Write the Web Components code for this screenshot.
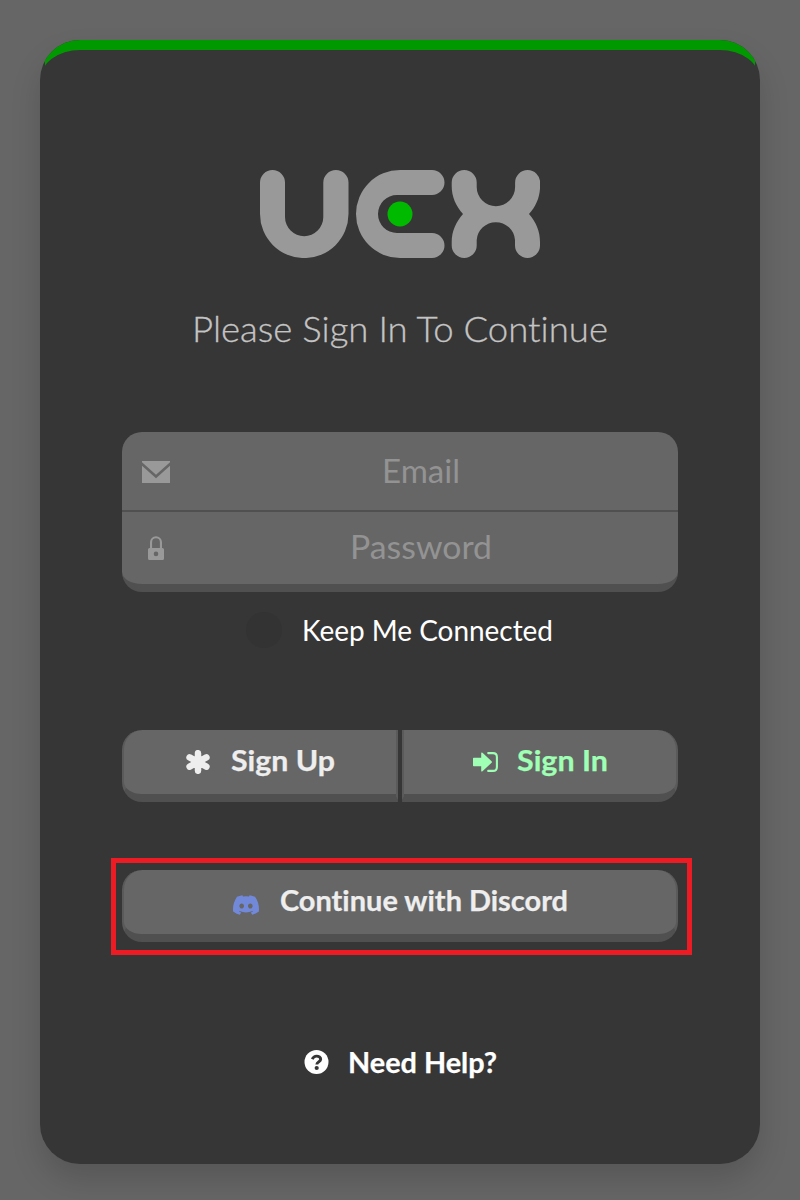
<!DOCTYPE html>
<html lang="en">
<head>
<meta charset="utf-8">
<title>UEX - Sign In</title>
<style>
html,body{margin:0;height:100%;background:#666}
body{font-family:Lato,"Open Sans",sans-serif;font-variant-ligatures:none;overflow:hidden}
</style>
</head>
<body>
<sign-in-page></sign-in-page>
<script>
const define = (name, html, setup) => customElements.define(name, class extends HTMLElement {
  constructor() {
    super();
    const t = document.createElement('template');
    t.innerHTML = html;
    this.attachShadow({mode: 'open'}).append(t.content.cloneNode(true));
  }
  connectedCallback() { if (setup) setup(this); }
});

// Text stretched horizontally so that the line has the given width.
define('ui-label', `<style>:host{display:block;white-space:nowrap;line-height:1.25}span{display:inline-block;transform-origin:0 50%}</style><span><slot></slot></span>`, el => {
  const span = el.shadowRoot.querySelector('span');
  const want = parseFloat(el.getAttribute('width'));
  const scale = want / span.getBoundingClientRect().width;
  el.style.width = want + 'px';
  span.style.transform = 'scaleX(' + scale + ')';
});

const icons = {
  mail: '<svg width="28" height="22" viewBox="0 0 28 22"><path d="M0 0H28V1.300L14 13.800 0 1.300zM0 4.800L14 17.300 28 4.800V22H0z"/></svg>',
  lock: '<svg width="16" height="24" viewBox="0 0 16 24"><path fill-rule="evenodd" d="M2 12V6.200a6 6 0 0 1 12 0V12h.400q1.600 0 1.600 1.600v8.800q0 1.600-1.600 1.600H1.600Q0 24 0 22.400V13.600Q0 12 1.600 12zM4.100 12h7.800V6.200a3.900 3.900 0 0 0-7.800 0zM8 15.600a2.300 2.300 0 1 0 0 4.600 2.300 2.300 0 0 0 0-4.600z"/></svg>',
  asterisk: '<svg width="24" height="24" viewBox="0 0 24 24"><path d="M12 3.200V20.800M3.600 7.400L20.400 16.600M20.400 7.400L3.600 16.600" fill="none" stroke="currentColor" stroke-width="6.500" stroke-linecap="round"/></svg>',
  login: '<svg width="25" height="20" viewBox="0 0 25 20"><path d="M0 6.500Q0 5.800.700 5.800H8.200V1.300Q8.200-.2 9.500.8L18.600 9.200Q19.300 10 18.600 10.800L9.500 19.200Q8.200 20.200 8.200 18.700V14.200H.700Q0 14.200 0 13.500z"/><path d="M15.200 1.100H20Q23.900 1.100 23.900 5V15Q23.900 18.900 20 18.900H15.200" style="fill:none" stroke="currentColor" stroke-width="2.100" stroke-linecap="round"/></svg>',
  discord: '<svg width="26" height="20" viewBox="0 0 24 18.600" preserveAspectRatio="none"><path transform="translate(0 -2.700)" d="M20.317 4.370a19.790 19.790 0 0 0-4.885-1.515.074.074 0 0 0-.079.037c-.210.375-.444.864-.608 1.250a18.270 18.270 0 0 0-5.487 0 12.640 12.640 0 0 0-.617-1.250.077.077 0 0 0-.079-.037A19.740 19.740 0 0 0 3.677 4.370C.533 9.046-.320 13.580.099 18.058a.082.082 0 0 0 .031.057 19.900 19.900 0 0 0 5.993 3.030.078.078 0 0 0 .084-.028c.462-.630.874-1.295 1.226-1.994a.076.076 0 0 0-.041-.106 13.107 13.107 0 0 1-1.872-.892.077.077 0 0 1-.008-.128l.372-.292a.074.074 0 0 1 .077-.010c3.928 1.793 8.180 1.793 12.062 0a.074.074 0 0 1 .078.010l.373.292a.077.077 0 0 1-.006.127 12.299 12.299 0 0 1-1.873.892.077.077 0 0 0-.041.107c.360.698.772 1.362 1.225 1.993a.076.076 0 0 0 .084.028 19.839 19.839 0 0 0 6.002-3.030.077.077 0 0 0 .032-.054c.500-5.177-.838-9.674-3.549-13.660zM8.020 15.331c-1.183 0-2.157-1.086-2.157-2.419s.956-2.419 2.157-2.419c1.210 0 2.176 1.095 2.157 2.419 0 1.333-.956 2.419-2.157 2.419zm7.975 0c-1.183 0-2.157-1.086-2.157-2.419s.955-2.419 2.157-2.419c1.210 0 2.176 1.095 2.157 2.419 0 1.333-.946 2.419-2.157 2.419z"/></svg>',
  help: '<svg width="25" height="24" viewBox="0 0 24 24"><circle cx="12" cy="12" r="12"/><path d="M7.700 9.200C8.700 7.200 10 6.100 12.100 6.100C14.300 6.100 16.200 7.400 16.200 9.300C16.200 11.800 12.300 11.600 12.300 14.500" stroke="#363636" style="fill:none" stroke-width="2.900"/><circle cx="12.200" cy="18" r="2.100" style="fill:#363636"/></svg>'
};
define('ui-icon', `<style>:host{display:block;flex:none}svg{display:block;fill:currentColor}</style><div></div>`, el => {
  el.shadowRoot.querySelector('div').innerHTML = icons[el.getAttribute('name')];
});

define('uex-logo', `<style>:host{display:block;width:280px;height:88px}svg{display:block}</style>
<svg width="280" height="88" viewBox="0 0 280 88" fill="#999">
<path d="M0 12.500a12.500 12.500 0 0 1 25 0V47a19 19 0 0 0 38.300 0V12.500a12.600 12.500 0 0 1 25.200 0V44a44.200 44 0 0 1-88.500 0z"/>
<path d="M140 0H172a12.500 12.500 0 0 1 0 25H137a19 19 0 0 0 0 38h35a12.500 12.500 0 0 1 0 25H140a44 44 0 0 1 0-88z"/>
<path d="M191.700 12.500a12.500 12.500 0 0 1 25 0V17a19.200 19.200 0 0 0 38.400 0V12.500a12.500 12.500 0 0 1 25 0V16C280 27 276 36 269 44 276 52 280 61 280 72V75.500a12.500 12.500 0 0 1-25 0V70a19.200 19.200 0 0 0-38.300 0V75.500a12.500 12.500 0 0 1-25 0V72C191.700 61 196 52 203 44 196 36 191.700 27 191.700 16z"/>
<circle cx="140" cy="44" r="12.500" fill="#00ba00"/></svg>`);

define('login-card', `<style>
:host{display:block;position:relative;box-sizing:border-box;width:720px;height:1124px;margin:40px;padding:130px 82px 0;border-radius:40px;background:#363636;box-shadow:0 16px 30px rgba(0,0,0,.15)}
:host::before{content:"";position:absolute;inset:0;box-sizing:border-box;border-radius:40px;border-top:10px solid #090;clip-path:inset(0 5px)}
</style><slot></slot>`);

define('input-group', `<style>:host{display:block;box-sizing:border-box;height:160px;border-radius:20px;background:#666;border-bottom:8px solid #505050;overflow:hidden}</style><slot></slot>`);
define('input-row', `<style>
:host{display:grid;grid-template-columns:68px 1fr;align-items:center;box-sizing:border-box;height:72px;color:#939393;font-size:32px}
:host([divided]){height:80px;border-bottom:2px solid #505050}
.icon{display:grid;place-items:center;color:#999}
.text{display:grid;justify-content:center;padding:0 26px 2px 0}
:host([divided]) .icon{padding-top:2px}
:host([divided]) .text{padding-bottom:1px}
</style><div class="icon"><slot name="icon"></slot></div><div class="text"><slot></slot></div>`);

define('push-button', `<style>
:host{display:flex;flex:1;align-items:center;justify-content:center;gap:21px;box-sizing:border-box;height:72px;background:#666;border:solid #505050;border-width:0 2px 8px;border-color:#5a5a5a #5a5a5a #505050;border-radius:20px;color:#eee;font-size:28px;font-weight:700}
:host([side=left]){border-radius:20px 0 0 20px}
:host([side=right]){border-radius:0 20px 20px 0;gap:19px;color:#9fffb4}
::slotted(ui-label){padding-bottom:4px;-webkit-text-stroke:.25px currentColor}
</style><slot name="icon"></slot><slot></slot>`);

define('check-row', `<style>:host{display:flex;align-items:center;gap:20px;height:36px;color:#fff;font-size:28px}i{width:36px;height:36px;border-radius:50%;background:#333}</style><i></i><slot></slot>`);
define('help-link', `<style>:host{display:flex;align-items:center;justify-content:center;gap:19px;height:36px;color:#fff;font-size:28px;font-weight:700}::slotted(ui-label){-webkit-text-stroke:.25px currentColor}</style><slot name="icon"></slot><slot></slot>`);
define('focus-frame', `<style>:host{display:flex;border:5px solid #ed1c24;padding:7px 9px 8px 6px;margin:56px -14px 0 -11px}</style><slot></slot>`);

define('sign-in-page', `<style>
:host{display:flow-root}
uex-logo{margin:0 auto}
.title{display:flex;justify-content:center;margin-top:48px;height:45px;font-size:36px;font-weight:300;color:#c4c4c4;-webkit-text-stroke:.3px #c4c4c4}
input-group{margin-top:81px}
check-row{margin:20px 0 0 124px}
.pair{display:flex;gap:4px;margin-top:82px}
help-link{margin-top:89px}
.discord{color:#7289da;margin-top:6px}
</style>
<login-card>
<uex-logo></uex-logo>
<div class="title"><ui-label width="416">Please Sign In To Continue</ui-label></div>
<input-group>
<input-row divided><ui-icon slot="icon" name="mail"></ui-icon><ui-label width="78">Email</ui-label></input-row>
<input-row><ui-icon slot="icon" name="lock"></ui-icon><ui-label width="142">Password</ui-label></input-row>
</input-group>
<check-row><ui-label width="251">Keep Me Connected</ui-label></check-row>
<div class="pair">
<push-button side="left"><ui-icon slot="icon" name="asterisk"></ui-icon><ui-label width="104">Sign Up</ui-label></push-button>
<push-button side="right"><ui-icon slot="icon" name="login"></ui-icon><ui-label width="91">Sign In</ui-label></push-button>
</div>
<focus-frame><push-button><ui-icon class="discord" slot="icon" name="discord"></ui-icon><ui-label width="288">Continue with Discord</ui-label></push-button></focus-frame>
<help-link><ui-icon slot="icon" name="help"></ui-icon><ui-label width="149">Need Help?</ui-label></help-link>
</login-card>`);
</script>
</body>
</html>
